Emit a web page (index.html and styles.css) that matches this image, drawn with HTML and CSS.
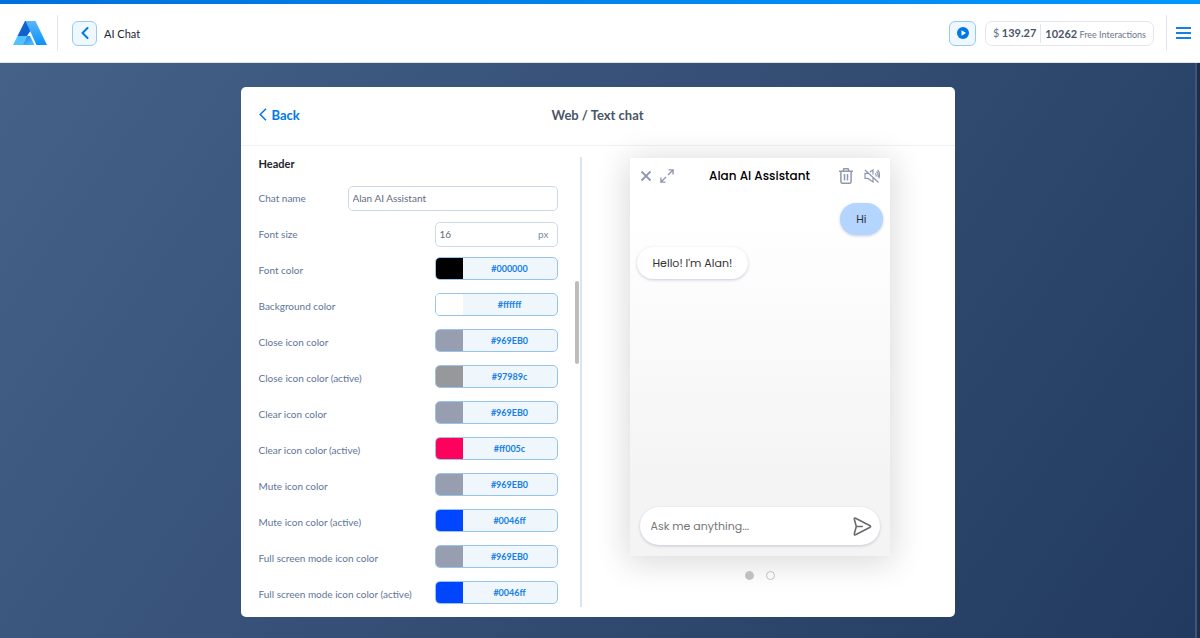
FILE: index.html
```html
<!DOCTYPE html>
<html lang="en">
<head>
<meta charset="utf-8">
<title>AI Chat</title>
<link rel="stylesheet" href="styles.css">
</head>
<body>
<header class="topbar">
  <a class="logo" href="#" aria-label="Home">
    <svg width="34" height="24" viewBox="0 0 34 24">
      <defs>
        <linearGradient id="g1" x1="0" y1="0" x2="0" y2="1"><stop offset="0" stop-color="#5bb5fb"/><stop offset="1" stop-color="#0a93fb"/></linearGradient>
        <linearGradient id="g2" x1="0" y1="0" x2="1" y2="1"><stop offset="0" stop-color="#1d7fe8"/><stop offset="1" stop-color="#57c6ff"/></linearGradient>
      </defs>
      <path d="M12 0 4.500 15H14L18 9 13.500 0z" fill="#0f62cf"/>
      <path d="M12.500 0H22.500L34 24H23.500z" fill="url(#g1)"/>
      <path d="M4.500 15H14L9.500 24H0z" fill="#4fc3ff"/>
      <path d="M14 15H17L21.500 24H9.500z" fill="url(#g2)"/>
    </svg>
  </a>
  <button class="square" type="button" aria-label="Go back">
    <svg width="8" height="12" viewBox="0 0 8 12"><path d="M6.500 1 1.500 6l5 5" fill="none" stroke="#0078e7" stroke-width="2" stroke-linecap="round" stroke-linejoin="round"/></svg>
  </button>
  <h1 class="page-name">AI Chat</h1>
  <button class="square play" type="button" aria-label="Play">
    <svg width="12" height="12" viewBox="0 0 12 12"><circle cx="6" cy="6" r="6" fill="#0078e7"/><path d="M4.500 3.300v5.400L9 6z" fill="#fff"/></svg>
  </button>
  <div class="balance">
    <span class="money"><span class="dollar">$</span> <b>139.27</b></span>
    <span class="free"><b>10262</b> Free Interactions</span>
  </div>
  <div class="menu">
    <button class="burger" type="button" aria-label="Menu"><i></i><i></i><i></i></button>
  </div>
</header>
<main class="stage">
  <section class="card">
    <div class="card-head">
      <a class="back" href="#"><svg width="8" height="13" viewBox="0 0 8 13"><path d="M7 .7 1.200 6.500 7 12.300" fill="none" stroke="#0078e7" stroke-width="1.500"/></svg>Back</a>
      <h2 class="title">Web / Text chat</h2>
    </div>
    <div class="card-body">
      <form class="settings">
        <h3 class="section">Header</h3>
        <div class="row"><label for="name">Chat name</label><input class="field wide" id="name" type="text" value="Alan AI Assistant"></div>
        <div class="row"><label for="size">Font size</label><span class="field unit"><input id="size" type="text" value="16"><span>px</span></span></div>
        <div class="row"><label for="c1">Font color</label><button class="color" id="c1" type="button"><i class="black"></i><span>#000000</span></button></div>
        <div class="row"><label for="c2">Background color</label><button class="color" id="c2" type="button"><i class="white"></i><span>#ffffff</span></button></div>
        <div class="row"><label for="c3">Close icon color</label><button class="color" id="c3" type="button"><i class="slate"></i><span>#969EB0</span></button></div>
        <div class="row"><label for="c4">Close icon color (active)</label><button class="color" id="c4" type="button"><i class="gray"></i><span>#97989c</span></button></div>
        <div class="row"><label for="c5">Clear icon color</label><button class="color" id="c5" type="button"><i class="slate"></i><span>#969EB0</span></button></div>
        <div class="row"><label for="c6">Clear icon color (active)</label><button class="color" id="c6" type="button"><i class="pink"></i><span>#ff005c</span></button></div>
        <div class="row"><label for="c7">Mute icon color</label><button class="color" id="c7" type="button"><i class="slate"></i><span>#969EB0</span></button></div>
        <div class="row"><label for="c8">Mute icon color (active)</label><button class="color" id="c8" type="button"><i class="blue"></i><span>#0046ff</span></button></div>
        <div class="row"><label for="c9">Full screen mode icon color</label><button class="color" id="c9" type="button"><i class="slate"></i><span>#969EB0</span></button></div>
        <div class="row"><label for="c10">Full screen mode icon color (active)</label><button class="color" id="c10" type="button"><i class="blue"></i><span>#0046ff</span></button></div>
        <div class="thumb"></div>
      </form>
      <div class="preview">
        <div class="chat">
          <div class="chat-head">
            <div class="tools">
              <button class="icon" type="button" aria-label="Close"><svg width="12" height="12" viewBox="0 0 12 12"><path d="M1.500 1.500l9 9M10.500 1.500l-9 9" stroke="#8f98b0" stroke-width="1.800" fill="none"/></svg></button>
              <button class="icon" type="button" aria-label="Full screen"><svg width="14" height="14" viewBox="0 0 14 14"><path d="M8.500.9h4.600v4.600M13 1 8 6M5.500 13.100H.9V8.500M1 13l5-5" stroke="#8f98b0" stroke-width="1.400" fill="none"/></svg></button>
            </div>
            <h4 class="chat-title">Alan AI Assistant</h4>
            <div class="tools end">
              <button class="icon" type="button" aria-label="Clear"><svg width="14" height="16" viewBox="0 0 14 16"><path d="M0 3.200h14M4.500 3V1.500q0-.8.800-.8h3.400q.8 0 .8.800V3M1.900 3.500v10q0 1.800 1.800 1.800h6.600q1.800 0 1.800-1.800v-10M5.500 6v6.500M8.500 6v6.500" stroke="#8f98b0" stroke-width="1.500" fill="none"/></svg></button>
              <button class="icon" type="button" aria-label="Mute"><svg width="16" height="14" viewBox="0 0 16 14"><path d="M1 1l13.500 12.500M4.300 4.400H1v5h3l5 3.500V9M5.800 3 9 1v4.600M11.200 4.300q1.200 1.200.9 3.200M12.500 2.300q2.200 2.300 1.500 5.700M13.700.8q2.800 3.700 1.200 8.600M10.700 10.500l.8-.7" stroke="#8f98b0" stroke-width="1.200" fill="none"/></svg></button>
            </div>
          </div>
          <div class="messages">
            <p class="bubble mine">Hi</p>
            <p class="bubble">Hello! I'm Alan!</p>
          </div>
          <div class="ask">
            <input type="text" placeholder="Ask me anything..." aria-label="Message">
            <button class="icon" type="button" aria-label="Send"><svg width="19" height="19" viewBox="0 0 19 19"><path d="M1.300 2.200q-.2-1.500 1.300-1l14.500 7.500q1 .8 0 1.500L2.600 17.800q-1.500.5-1.300-1L3.300 9.500zM3.300 9.500h6" stroke="#6b6b6b" stroke-width="1.600" fill="none" stroke-linejoin="round" stroke-linecap="round"/></svg></button>
          </div>
        </div>
        <div class="dots"><button class="dot on" type="button" aria-label="Slide 1"></button><button class="dot" type="button" aria-label="Slide 2"></button></div>
      </div>
    </div>
  </section>
  <div class="page-scroll"></div>
</main>
</body>
</html>
```
FILE: styles.css
```css
* { box-sizing: border-box; }
body { margin: 0; min-height: 100vh; display: flex; flex-direction: column; font-family: Lato, "Liberation Sans", sans-serif; font-size: 11px; color: #4a5568; }
h1, h2, h3, h4, p { margin: 0; }
button { font: inherit; padding: 0; border: 0; background: none; cursor: pointer; }
svg { display: block; }

.topbar { display: flex; align-items: center; height: 63px; padding: 4px 9px 0 13px; border-bottom: 1px solid #dfe3ea; background: linear-gradient(90deg, #0070dc, #0098ff) top / 100% 4px no-repeat #fff; }
.logo { display: flex; align-items: center; height: 36px; width: 45px; border-right: 1px solid #e1e5ee; }
.square { display: flex; align-items: center; justify-content: center; width: 25px; height: 25px; margin-left: 14px; border: 1px solid #96c8fa; border-radius: 6px; background: #eff7ff; }
.page-name { margin-left: 7px; font-size: 11px; font-weight: 400; color: #1c2530; }
.play { width: 27px; margin-left: auto; }
.balance { display: flex; align-items: center; height: 25px; margin-left: 9px; padding: 0 7px; border: 1px solid #e4e7ee; border-radius: 7px; font-size: 9px; color: #6b7588; }
.balance b { font-size: 11px; color: #4a5568; }
.dollar { font-size: 11px; }
.money { padding-right: 4px; line-height: 18px; border-right: 1px solid #e1e5ee; }
.free { padding-left: 4px; }
.menu { display: flex; align-items: center; height: 36px; margin-left: 12px; padding-left: 9px; border-left: 1px solid #e1e5ee; }
.burger { display: flex; flex-direction: column; gap: 3px; width: 15px; }
.burger i { height: 2px; background: #1580e8; }

.stage { flex: 1; display: grid; grid-template-columns: 1fr 5px; align-items: start; background: linear-gradient(125deg, #456188, #223a60); }
.page-scroll { align-self: stretch; background: #1e2d49; border-left: 2px solid #3f557a; }
.card { width: 100%; max-width: 714px; margin: 24px auto 20px; background: #fff; border-radius: 5px; overflow: hidden; }
.card-head { display: grid; grid-template-columns: 1fr auto 1fr; align-items: center; height: 59px; padding: 0 18px 3px; border-bottom: 1px solid #f0f1f4; }
.back { display: flex; align-items: center; gap: 5px; color: #0078e7; font-size: 13px; font-weight: 700; text-decoration: none; }
.title { font-size: 13px; font-weight: 700; color: #4a5568; }

.card-body { display: grid; grid-template-columns: 341px minmax(0, 1fr); padding: 11px 0 10px; }
.settings { position: relative; height: 450px; overflow: hidden; padding: 0 22px 0 18px; border-right: 2px solid #d9e4f3; }
.section { height: 23px; line-height: 14px; font-size: 11px; font-weight: 700; color: #1c2530; }
.row { display: flex; align-items: center; justify-content: space-between; height: 36px; color: #60749a; font-size: 10px; }
.field { width: 123px; height: 25px; border: 1px solid #c9d9ee; border-radius: 5px; padding: 0 4px; font-family: inherit; font-size: 10px; color: #5f6b80; background: #fff; }
.wide { width: 210px; }
.unit { display: flex; align-items: center; padding-right: 8px; }
.unit input { flex: 1; min-width: 0; border: 0; padding: 0; font: inherit; color: inherit; }
.unit span { color: #7c8aa8; }
.color { display: flex; width: 123px; height: 23px; margin-bottom: 4px; border: 1px solid #96c4f0; border-radius: 5px; overflow: hidden; background: #eff6fc; color: #1580e8; font-size: 9px; font-weight: 700; line-height: 21px; }
.color i { width: 27px; height: 21px; }
.color span { flex: 1; }
.black { background: #000; }
.white { background: #fff; }
.slate { background: #969eb0; }
.gray { background: #97989c; }
.pink { background: #ff005c; }
.blue { background: #0046ff; }
.thumb { position: absolute; top: 124px; right: 1px; width: 4px; height: 83px; border-radius: 2px; background: #bdbdbd; }

.preview { padding: 1px 65px 0 48px; font-family: Poppins, Inter, sans-serif; }
.chat { display: flex; flex-direction: column; height: 398px; padding: 0 10px 11px; border-radius: 3px; background: linear-gradient(#fff 15%, #f4f4f4 80%); box-shadow: 0 4px 32px 4px rgba(0, 0, 0, .14); }
.chat-head { display: grid; grid-template-columns: 1fr auto 1fr; align-items: center; height: 36px; }
.tools { display: flex; align-items: center; gap: 8px; }
.end { justify-content: flex-end; gap: 11px; }
.icon { display: block; }
.chat-title { font-size: 12px; font-weight: 500; color: #000; }
.messages { flex: 1; display: flex; flex-direction: column; align-items: flex-start; gap: 12px; margin: 0 -3px; padding-top: 9px; }
.bubble { height: 32px; padding: 0 16px; border-radius: 16px; line-height: 32px; font-size: 11px; color: #333; background: #fff; box-shadow: 0 1px 3px rgba(80, 90, 140, .3); }
.mine { align-self: flex-end; background: #b3d5ff; }
.ask { display: flex; align-items: center; height: 38px; padding: 0 8px 0 11px; border-radius: 19px; background: #fff; box-shadow: 0 1px 3px rgba(80, 90, 140, .3); }
.ask input { flex: 1; min-width: 0; border: 0; padding: 0; background: none; font: inherit; }
.ask input::placeholder { color: #757575; }
.dots { display: flex; justify-content: center; gap: 12px; padding-top: 15px; }
.dot { width: 9px; height: 9px; border: 1px solid #bfc0c4; border-radius: 50%; }
.on { background: #bfc0c4; }
```
